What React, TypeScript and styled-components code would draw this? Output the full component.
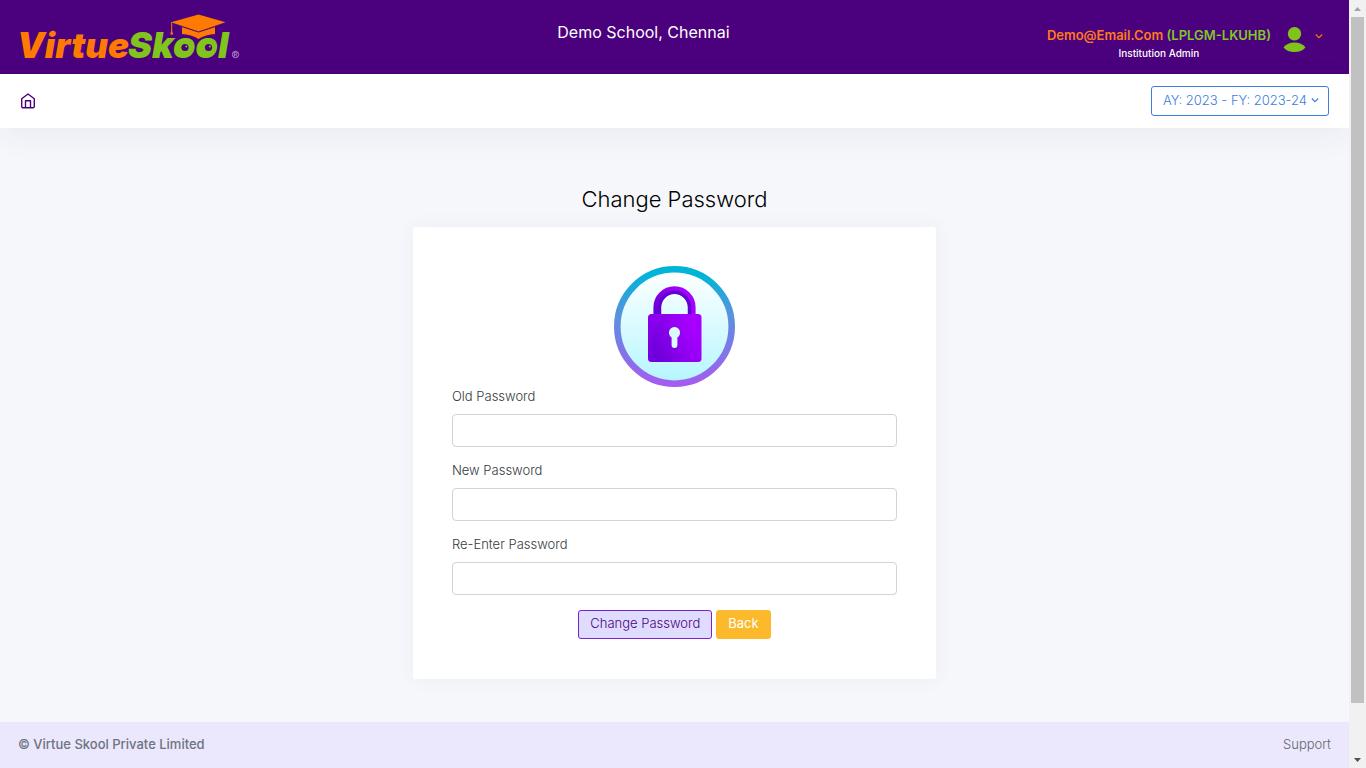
import React from "react";
import styled, { createGlobalStyle } from "styled-components";

const GlobalStyle = createGlobalStyle`
  * { box-sizing: border-box; }
  body {
    margin: 0;
    background: #f5f7fb;
    font-family: Inter, "Liberation Sans", sans-serif;
    font-size: 13px;
    line-height: 18px;
    color: #4b5563;
  }
  button, input { font: inherit; }
`;

const Window = styled.div`
  display: flex;
  min-height: 100vh;
`;

const Page = styled.div`
  flex: 1;
  min-width: 0;
  display: flex;
  flex-direction: column;
`;

const Header = styled.header`
  display: flex;
  justify-content: space-between;
  height: 74px;
  padding: 0 26px 0 16px;
  background: #4b007d;
`;

const Brand = styled.a`
  display: block;
`;

const LogoText = styled.text<{ $size: number }>`
  font-family: Inter, sans-serif;
  font-size: ${(p) => p.$size}px;
  font-weight: 900;
  font-style: italic;
`;

const SchoolName = styled.div`
  padding-top: 23px;
  font-size: 16px;
  color: #fff;
`;

const Account = styled.button`
  display: flex;
  align-items: flex-start;
  padding: 26px 0 0;
  border: 0;
  background: none;
`;

const AccountText = styled.span`
  display: flex;
  flex-direction: column;
  align-items: center;
`;

const Email = styled.span`
  font-weight: 600;
  color: #ff7a1a;
`;

const Code = styled.span`
  color: #7fc828;
`;

const Role = styled.span`
  font-size: 10px;
  line-height: 18px;
  font-weight: 500;
  color: #fff;
`;

const AccountIcons = styled.span`
  display: flex;
  align-items: flex-start;
  gap: 9px;
  margin-left: 12px;
  color: #ff7a00;
`;

const Toolbar = styled.nav`
  display: flex;
  align-items: center;
  justify-content: space-between;
  height: 54px;
  padding: 0 20px;
  background: #fff;
  box-shadow: 0 8px 30px rgba(40, 50, 70, 0.06);
`;

const HomeLink = styled.a`
  display: flex;
  color: #4b007d;
`;

const YearButton = styled.button`
  display: flex;
  align-items: center;
  gap: 4px;
  height: 30px;
  padding: 0 9px 3px 11px;
  border: 1px solid #3b7ddd;
  border-radius: 3px;
  background: #fff;
  color: #3b7ddd;
  font-weight: 300;
`;

const Main = styled.main`
  flex: 1;
  display: flex;
  flex-direction: column;
  align-items: center;
  padding: 58px 18px 43px;
`;

const Title = styled.h1`
  margin: 0 0 15px;
  font-size: 22px;
  line-height: 26px;
  font-weight: 300;
  color: #000;
`;

const Column = styled.div`
  width: calc(100% * 5 / 12);
  min-width: 360px;
  padding: 0 12px;
`;

const Card = styled.form`
  display: flex;
  flex-direction: column;
  padding: 39px 39px 40px;
  border-radius: 3px;
  background: #fff;
  box-shadow: 0 0 20px rgba(76, 87, 125, 0.05);
`;

const LockImage = styled.svg`
  align-self: center;
  display: block;
`;

const Field = styled.label`
  display: flex;
  flex-direction: column;
  gap: 9px;
  margin-bottom: 14px;
  font-weight: 300;
  color: #343a40;
`;

const PasswordInput = styled.input`
  width: 100%;
  height: 33px;
  padding: 0 12px;
  border: 1px solid #ced4da;
  border-radius: 4px;
  background: #fff;
`;

const Actions = styled.div`
  display: flex;
  justify-content: center;
  gap: 4px;
  padding-top: 1px;
`;

const ActionButton = styled.button<{ $tone: "primary" | "warning" }>`
  height: 29px;
  padding: 0 11px 3px;
  border: 1px solid ${(p) => (p.$tone === "primary" ? "#7a22d0" : "#fcb92c")};
  border-radius: 3px;
  background: ${(p) => (p.$tone === "primary" ? "#e0dcff" : "#fcb92c")};
  color: ${(p) => (p.$tone === "primary" ? "#4b007d" : "#fff")};
  font-weight: ${(p) => (p.$tone === "primary" ? 300 : 400)};
`;

const Footer = styled.footer`
  display: flex;
  align-items: center;
  justify-content: space-between;
  height: 46px;
  padding: 0 18px 2px;
  background: #ebe7fd;
  color: #6c757d;
`;

const Copyright = styled.span`
  font-weight: 500;
`;

const SupportLink = styled.a`
  font-weight: 300;
  color: #5f6870;
  text-decoration: none;
`;

const ScrollTrack = styled.div`
  display: flex;
  flex-direction: column;
  align-items: center;
  width: 17px;
  background: #f1f1f1;
`;

const ScrollArrow = styled.svg`
  flex: none;
  display: block;
`;

const ScrollArea = styled.div`
  flex: 1;
  display: flex;
  flex-direction: column;
`;

const ScrollThumb = styled.div`
  flex: 686;
  width: 13px;
  background: #c1c1c1;
`;

const ScrollRest = styled.div`
  flex: 48;
`;

function Logo() {
  return (
    <svg width="224" height="74" viewBox="-4 0 224 74" role="img" aria-label="VirtueSkool">
      <LogoText $size={35} x="-3" y="58" fill="#ff7a00">Virtue</LogoText>
      <LogoText $size={36} x="108" y="58" fill="#80c41c">Skool</LogoText>
      <ellipse cx="166" cy="48.500" rx="6.500" ry="6.500" fill="#80c41c" />
      <ellipse cx="189" cy="48.500" rx="6.500" ry="6.500" fill="#80c41c" />
      <g fill="#4b007d">
        <circle cx="165" cy="47.500" r="3.600" />
        <circle cx="188.500" cy="47.500" r="3.600" />
      </g>
      <g fill="#80c41c">
        <circle cx="166.300" cy="46.500" r="1" />
        <circle cx="189.800" cy="46.500" r="1" />
      </g>
      <path d="M162 26v8c6 .5 12 2 16.500 5 4.500-3 10.500-4.500 16.500-5v-8l-16.500 5z" fill="#ff7a00" />
      <path d="M151 22.300 178.500 14.500 205.500 22.300 178.500 31.500z" fill="#ff7a00" />
      <path d="M161 26.300 178.500 32l17.500-5.700" stroke="#4b007d" strokeWidth="1" fill="none" />
      <path d="M151.700 22.300v9" stroke="#ff7a00" fill="none" />
      <path d="M151.700 29.500l1.500 5h-3z" fill="#ff7a00" />
      <circle cx="215.500" cy="54.500" r="3.200" stroke="#c9a8e6" strokeWidth="0.800" fill="none" />
      <path d="M214.300 56.500v-4h1.400a1.100 1.100 0 0 1 0 2.200h-1.400m1.400 0 1.200 1.800" stroke="#c9a8e6" strokeWidth="0.700" fill="none" />
    </svg>
  );
}

function Chevron({ height }: { height: number }) {
  return (
    <svg width="8" height={height} viewBox={`0 ${-(height - 6) / 2} 8 ${height}`} fill="none" stroke="currentColor" strokeWidth="1.100" aria-hidden="true">
      <path d="M0.800 1.500 4 4.700 7.200 1.500" />
    </svg>
  );
}

function Avatar() {
  return (
    <svg width="23" height="27" viewBox="0 0 23 27" fill="#7fc41c" aria-hidden="true">
      <circle cx="11.500" cy="7.700" r="6.700" />
      <path d="M0.500 21.500C3 18 7 16.600 11.500 16.600S20 18 22.500 21.500C20 24.500 16 26 11.500 26S3 24.500 0.500 21.500z" />
    </svg>
  );
}

function Lock() {
  return (
    <LockImage width="121" height="121" viewBox="0 0 121 121" aria-hidden="true">
      <defs>
        <linearGradient id="ring" x1="0" y1="0" x2="0" y2="1">
          <stop offset="0.050" stopColor="#00b4d8" />
          <stop offset="0.400" stopColor="#5a92de" />
          <stop offset="1" stopColor="#a45cf0" />
        </linearGradient>
        <linearGradient id="disc" x1="0" y1="0" x2="0" y2="1">
          <stop offset="0" stopColor="#ffffff" />
          <stop offset="1" stopColor="#b4f6ff" />
        </linearGradient>
        <linearGradient id="body" x1="0" y1="0.800" x2="1" y2="0.200">
          <stop offset="0" stopColor="#6a00d8" />
          <stop offset="0.900" stopColor="#a800ff" />
        </linearGradient>
        <linearGradient id="shade" x1="0" y1="0.800" x2="1" y2="0.200">
          <stop offset="0" stopColor="#7600e0" />
          <stop offset="0.850" stopColor="#a400ff" />
        </linearGradient>
        <clipPath id="bodyClip">
          <rect x="34" y="48" width="53.500" height="48" rx="3.500" />
        </clipPath>
      </defs>
      <circle cx="60.500" cy="60.500" r="57.200" fill="url(#disc)" stroke="url(#ring)" strokeWidth="6.600" />
      <path d="M43.200 50V41.300a17.300 17.300 0 0 1 34.600 0V50" fill="none" stroke="url(#body)" strokeWidth="7.600" />
      <path d="M45.500 50V41.300a15 15 0 0 1 30 0V50" fill="none" stroke="#6400d2" strokeWidth="3.500" />
      <rect x="34" y="48" width="53.500" height="48" rx="3.500" fill="url(#shade)" />
      <path clipPath="url(#bodyClip)" d="M52 47C38 58 34 80 42 97H64C80 88 85 68 81 47z" fill="url(#body)" />
      <path d="M57.600 71.500a5.600 5.600 0 1 1 5.800 0V79a2.900 2.900 0 0 1-5.800 0z" fill="#d9fbff" />
    </LockImage>
  );
}

const fields = [
  { id: "old-password", label: "Old Password" },
  { id: "new-password", label: "New Password" },
  { id: "confirm-password", label: "Re-Enter Password" },
];

export default function App() {
  return (
    <>
      <GlobalStyle />
      <Window>
        <Page>
          <Header>
            <Brand href="#"><Logo /></Brand>
            <SchoolName>Demo School, Chennai</SchoolName>
            <Account type="button" aria-haspopup="menu">
              <AccountText>
                <Email>Demo@Email.Com <Code>(LPLGM-LKUHB)</Code></Email>
                <Role>Institution Admin</Role>
              </AccountText>
              <AccountIcons>
                <Avatar />
                <Chevron height={20} />
              </AccountIcons>
            </Account>
          </Header>
          <Toolbar>
            <HomeLink href="#" aria-label="Home">
              <svg width="16" height="16" viewBox="0 0 16 16" fill="none" stroke="currentColor" strokeWidth="1.400" strokeLinejoin="round" aria-hidden="true">
                <path d="M1.700 5.800 8 1l6.300 4.800V13.500a1.300 1.300 0 0 1-1.300 1.300H3a1.300 1.300 0 0 1-1.300-1.300z" />
                <path d="M5.500 14.800V7.800h5v7" />
              </svg>
            </HomeLink>
            <YearButton type="button" aria-haspopup="menu">
              AY: 2023 - FY: 2023-24
              <Chevron height={6} />
            </YearButton>
          </Toolbar>
          <Main>
            <Title>Change Password</Title>
            <Column>
              <Card>
                <Lock />
                {fields.map((f) => (
                  <Field key={f.id} htmlFor={f.id}>
                    {f.label}
                    <PasswordInput id={f.id} type="password" />
                  </Field>
                ))}
                <Actions>
                  <ActionButton type="button" $tone="primary">Change Password</ActionButton>
                  <ActionButton type="button" $tone="warning">Back</ActionButton>
                </Actions>
              </Card>
            </Column>
          </Main>
          <Footer>
            <Copyright>© Virtue Skool Private Limited</Copyright>
            <SupportLink href="#">Support</SupportLink>
          </Footer>
        </Page>
        <ScrollTrack aria-hidden="true">
          <ScrollArrow width="17" height="17" viewBox="0 0 17 17"><path d="M5 11h7L8.500 7z" fill="#a3a3a3" /></ScrollArrow>
          <ScrollArea>
            <ScrollThumb />
            <ScrollRest />
          </ScrollArea>
          <ScrollArrow width="17" height="17" viewBox="0 0 17 17"><path d="M5 7h7L8.500 11z" fill="#505050" /></ScrollArrow>
        </ScrollTrack>
      </Window>
    </>
  );
}
